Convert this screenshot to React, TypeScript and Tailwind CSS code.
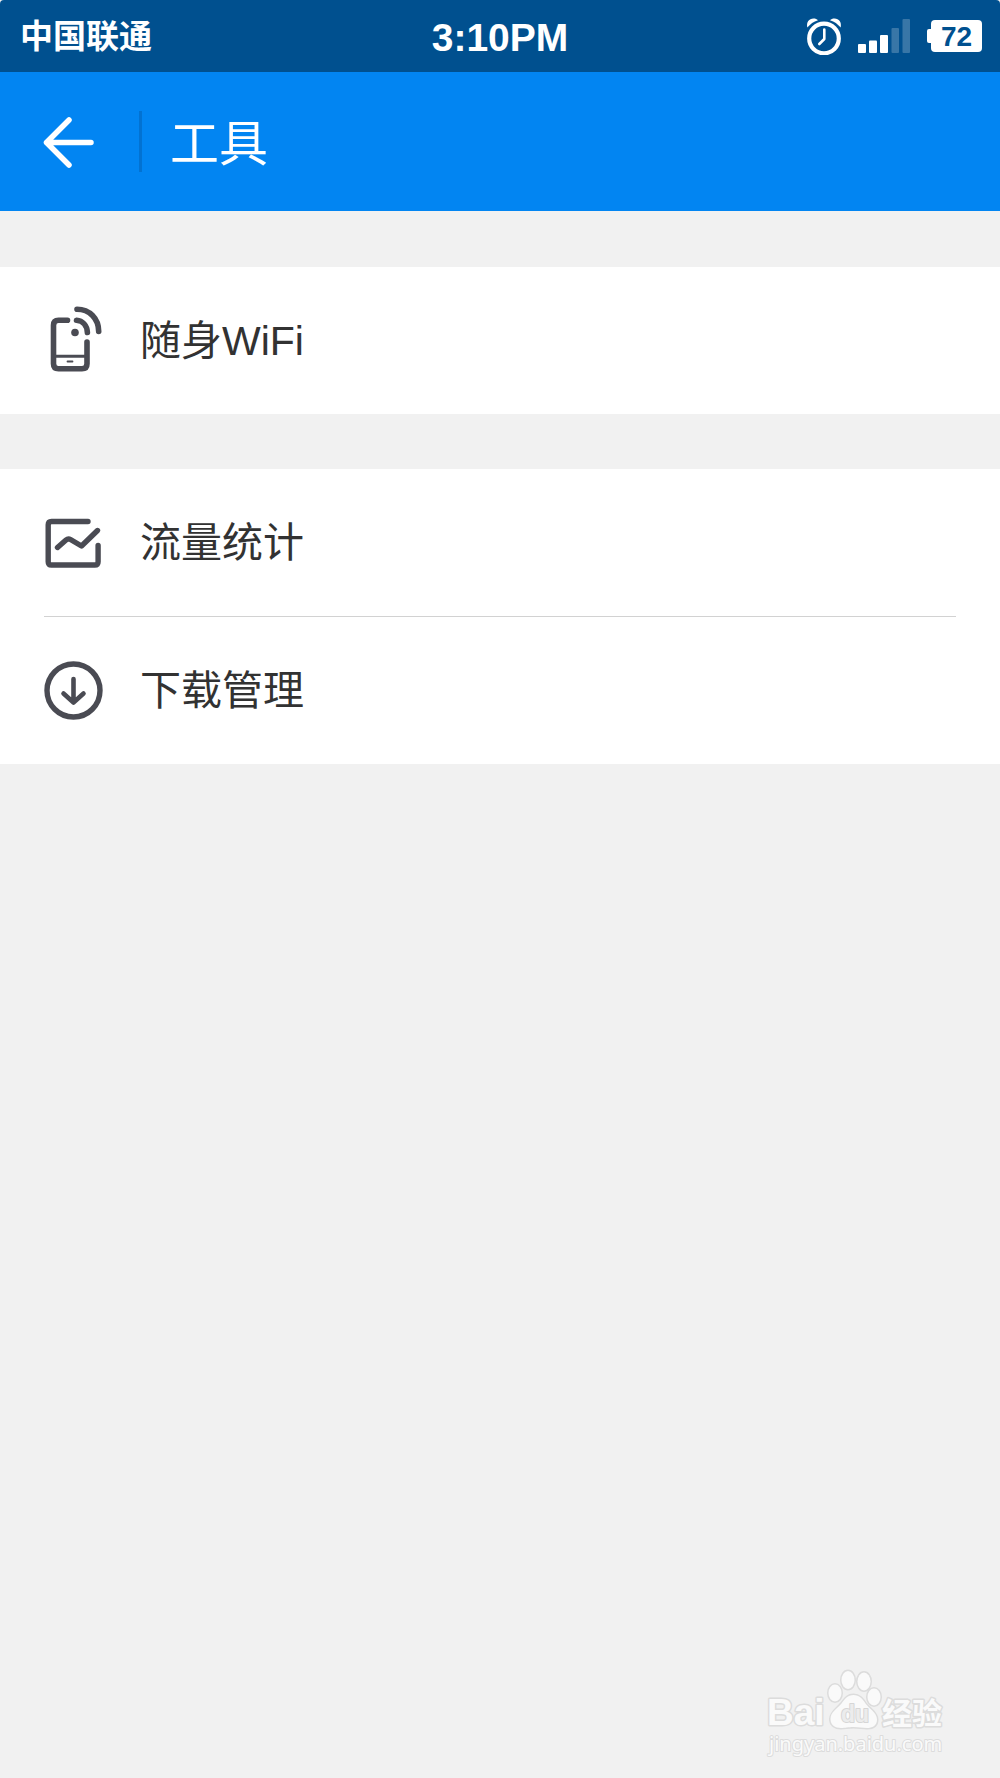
import type { ReactNode } from "react";

function AlarmIcon() {
  return (
    <svg width="36" height="38" viewBox="0 0 36 38" fill="none" stroke="#fff" aria-hidden="true">
      <circle cx="18" cy="21.500" r="14.800" strokeWidth="4.200" />
      <path d="M18.300 12.500v9.500l-5 5" strokeWidth="2.600" strokeLinecap="round" strokeLinejoin="round" />
      <path d="M1.300 10.500C.2 5 3 1.500 7.500 1.500c2 0 3.300.5 4.500 1.700C7.500 4.600 4.300 7 1.300 10.500z" fill="#fff" stroke="none" />
      <path d="M34.700 10.500C35.800 5 33 1.500 28.500 1.500c-2 0-3.300.5-4.500 1.700 4.500 1.400 7.700 3.800 10.700 7.300z" fill="#fff" stroke="none" />
    </svg>
  );
}

function SignalIcon() {
  return (
    <svg width="53" height="34" viewBox="0 0 53 34" fill="#fff" aria-hidden="true">
      <rect x="0" y="25" width="8" height="9" rx="1" />
      <rect x="11" y="21.500" width="8" height="12.500" rx="1" />
      <rect x="22" y="16" width="8" height="18" rx="1" />
      <rect x="33.500" y="9" width="7.500" height="25" rx="1" opacity=".22" />
      <rect x="44.500" y="0" width="7.500" height="34" rx="1" opacity=".22" />
    </svg>
  );
}

function Battery({ level }: { level: number }) {
  return (
    <div className="flex items-center">
      <div className="h-[14px] w-1 rounded-l-[2px] bg-white" />
      <div className="flex h-8 w-[51px] items-center justify-center rounded-[4px] bg-white pt-0.5 text-[28px] leading-8 font-bold text-[#00508f]">
        {level}
      </div>
    </div>
  );
}

function HotspotIcon() {
  return (
    <svg width="60" height="66" viewBox="-1 2 60 66" fill="none" stroke="#4a4b53" strokeWidth="5.600" strokeLinecap="round" overflow="visible" aria-hidden="true">
      <path d="M22.500 14.300H13.500q-5 0-5 5v38.400q0 5 5 5h23.500q5 0 5-5V36" />
      <path d="M8.500 50.300h33.500" strokeWidth="3" strokeLinecap="butt" />
      <path d="M22.500 55.500h5" strokeWidth="1.800" />
      <path d="M31.500 14.300c6 .5 10.500 5 10.900 12.200" />
      <path d="M32 3.200c12.500 0 21.700 9.300 21.700 22.300" />
      <circle cx="30" cy="26.500" r="3.800" fill="#4a4b53" stroke="none" />
    </svg>
  );
}

function TrafficIcon() {
  return (
    <svg width="60" height="60" viewBox="-1 0 60 60" fill="none" stroke="#4a4b53" strokeWidth="5.400" strokeLinecap="round" strokeLinejoin="round" aria-hidden="true">
      <path d="M43 8.500H6.500q-3.300 0-3.300 3.300v36.900q0 3.300 3.300 3.300h43.300q3.300 0 3.300-3.300V32.500" />
      <path d="M12.500 34.500l8.500-7.500q2.200-1.900 4.500-.5L36.500 33 52.500 17.500" />
    </svg>
  );
}

function DownloadIcon() {
  return (
    <svg width="60" height="60" viewBox="0 0 60 60" fill="none" stroke="#4a4b53" strokeLinecap="round" strokeLinejoin="round" aria-hidden="true">
      <circle cx="29.500" cy="29.500" r="26.500" strokeWidth="5.400" />
      <path d="M29.500 18V40.500M19.500 32.500l10 9 10-9" strokeWidth="4.600" />
    </svg>
  );
}

function MenuItem({ icon, label }: { icon: ReactNode; label: string }) {
  return (
    <button type="button" className="box-content flex h-[147px] w-full cursor-pointer items-center gap-9 text-left">
      {icon}
      <span className="text-[41px] leading-[60px]">{label}</span>
    </button>
  );
}

function Watermark() {
  return (
    <svg
      className="absolute right-12 bottom-4"
      width="190"
      height="96"
      viewBox="0 0 190 96"
      fill="#fafafa"
      stroke="#dcdcdc"
      strokeWidth="3"
      strokeLinejoin="round"
      paintOrder="stroke"
      role="img"
      aria-label="Baidu 经验"
    >
      <text x="5" y="59" fontSize="37" fontWeight="700">Bai</text>
      <ellipse cx="73" cy="27" rx="6.500" ry="8.500" />
      <ellipse cx="86" cy="14" rx="6.500" ry="9" />
      <ellipse cx="102" cy="15.500" rx="6.500" ry="9" />
      <ellipse cx="112" cy="31" rx="6.500" ry="8.500" />
      <path d="M91.500 29c6 0 9 4 12 8.500 3.500 5 11.500 9 11.500 16 0 6.500-5 8.500-10 8.500-5 0-8-1-13.500-1s-8 1-12.500 1c-6 0-10.500-3-10.500-9 0-7 7-10.500 11-15.500 3.500-4.500 6-8.500 12-8.500z" />
      <text x="79" y="56" fontSize="23" fontWeight="700" strokeWidth="2" fill="#ececec" stroke="#d6d6d6">du</text>
      <text x="120" y="58" fontSize="30" fontWeight="700">经验</text>
      <text x="7" y="85" fontSize="20" strokeWidth="2" fontFamily="Noto Sans, sans-serif">jingyan.baidu.com</text>
    </svg>
  );
}

export default function App() {
  return (
    <div className="relative min-h-screen bg-[#f1f1f1] font-['Liberation_Sans','Noto_Sans_CJK_SC',sans-serif] text-[#323232]">
      <div className="grid h-[72px] grid-cols-[1fr_auto_1fr] items-center rounded-t-[4px] bg-[#00508f] px-[18px] text-white">
        <span className="pt-0.5 pl-0.5 text-[33px] leading-[48px] font-bold">中国联通</span>
        <span className="pt-1 text-[39px] leading-[48px] font-bold">3:10PM</span>
        <div className="flex items-center gap-4 justify-self-end">
          <AlarmIcon />
          <SignalIcon />
          <Battery level={72} />
        </div>
      </div>

      <header className="flex h-[139px] items-center bg-[#0285f2] px-10 text-white">
        <button type="button" aria-label="返回" className="cursor-pointer">
          <svg width="60" height="60" viewBox="0 0 60 60" fill="none" stroke="#fff" strokeWidth="5.500" strokeLinecap="round" strokeLinejoin="round">
            <path d="M29 8L6.500 30.500 29 53M6.500 30.500H51" />
          </svg>
        </button>
        <div className="ml-[39px] h-[61px] w-[3px] bg-[#0272d2]" />
        <h1 className="ml-7 pt-1 text-[49px] leading-[72px]">工具</h1>
      </header>

      <main className="flex flex-col gap-[55px] pt-14">
        <section className="bg-white px-11">
          <MenuItem icon={<HotspotIcon />} label="随身WiFi" />
        </section>
        <section className="divide-y divide-[#d2d2d2] bg-white px-11">
          <MenuItem icon={<TrafficIcon />} label="流量统计" />
          <MenuItem icon={<DownloadIcon />} label="下载管理" />
        </section>
      </main>

      <Watermark />
    </div>
  );
}
